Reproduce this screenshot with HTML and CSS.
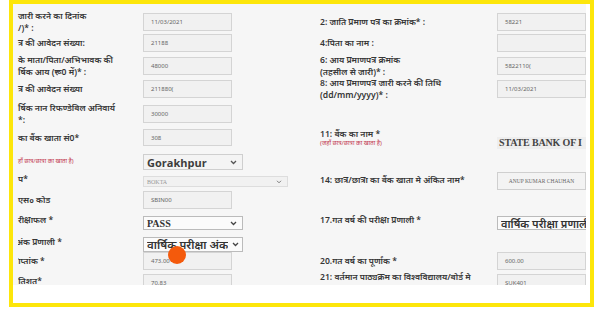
FILE: index.html
```html
<!DOCTYPE html>
<html lang="hi">

<head>
    <meta charset="UTF-8">
    <meta name="viewport" content="width=device-width, initial-scale=1.0">
    <title>छात्रवृत्ति आवेदन पत्र</title>
    <link rel="stylesheet" href="styles.css">
</head>

<body>
    <div class="frame">
        <div class="sheet">
            <div class="form-grid">
                <!-- row 1 -->
                <div class="lbl two">जारी करने का दिनांक<br>/)* :</div>
                <div class="cell"><div class="box">11/03/2021</div></div>
                <div class="lbl">2: जाति प्रमाण पत्र का क्रमांक* :</div>
                <div class="cell"><div class="box">58221</div></div>

                <!-- row 2 -->
                <div class="lbl">त्र की आवेदन संख्या:</div>
                <div class="cell"><div class="box">21188</div></div>
                <div class="lbl">4:पिता का नाम :</div>
                <div class="cell"><div class="box"></div></div>

                <!-- row 3 -->
                <div class="lbl two">के माता/पिता/अभिभावक की<br>र्षिक आय (रू0 में)* :</div>
                <div class="cell"><div class="box">48000</div></div>
                <div class="lbl two">6: आय प्रमाणपत्र क्रमांक<br>(तहसील से जारी)* :</div>
                <div class="cell"><div class="box">5822110(</div></div>

                <!-- row 4 -->
                <div class="lbl">त्र की आवेदन संख्या</div>
                <div class="cell"><div class="box">211880(</div></div>
                <div class="lbl two">8: आय प्रमाणपत्र जारी करने की तिथि<br>(dd/mm/yyyy)* :</div>
                <div class="cell"><div class="box">11/03/2021</div></div>

                <!-- row 5 -->
                <div class="lbl two">र्षिक नान रिफण्डेबिल अनिवार्य<br>*:</div>
                <div class="cell"><div class="box">30000</div></div>
                <div></div>
                <div></div>

                <!-- row 6 -->
                <div class="lbl">का बैंक खाता सं0*</div>
                <div class="cell"><div class="box box-short">308</div></div>
                <div class="lbl lbl-bank">11: बैंक का नाम *<br><span class="note">(जहाँ छात्र/छात्रा का खाता है)</span></div>
                <div class="cell cell-bank"><div class="bank">STATE BANK OF I</div></div>

                <!-- row 7 -->
                <div class="lbl note up-2">हाँ छात्र/छात्रा का खाता है)</div>
                <div class="cell">
                    <div class="pick pick-big">
                        <span>Gorakhpur</span>
                        <svg width="7" height="5" viewBox="0 0 7 5"><path d="M1 1l2.5 2.5L6 1" fill="none" stroke="#555" stroke-width="1.3"/></svg>
                    </div>
                </div>
                <div></div>
                <div></div>

                <!-- row 8 -->
                <div class="lbl up-6">प*</div>
                <div class="cell">
                    <div class="pick pick-wide">
                        <span>BOKTA</span>
                        <svg width="6" height="4" viewBox="0 0 7 5"><path d="M1 1l2.5 2.5L6 1" fill="none" stroke="#777" stroke-width="1.2"/></svg>
                    </div>
                </div>
                <div class="lbl up-5">14: छात्र/छात्रा का बैंक खाता मे अंकित नाम*</div>
                <div class="cell cell-name"><div class="box box-name">ANUP KUMAR CHAUHAN</div></div>

                <!-- row 9 -->
                <div class="lbl">एस० कोड</div>
                <div class="cell"><div class="box">SBIN00</div></div>
                <div></div>
                <div></div>

                <!-- row 10 -->
                <div class="lbl up-5">रीक्षाफल *</div>
                <div class="cell">
                    <div class="pick pick-pass">
                        <span>PASS</span>
                        <svg width="7" height="5" viewBox="0 0 7 5"><path d="M1 1l2.5 2.5L6 1" fill="none" stroke="#444" stroke-width="1.3"/></svg>
                    </div>
                </div>
                <div class="lbl up-5">17.गत वर्ष की परीक्षा प्रणाली *</div>
                <div class="cell"><div class="pick pick-cut"><span>वार्षिक परीक्षा प्रणाली</span></div></div>

                <!-- row 11 -->
                <div class="lbl cut up-4"><span class="shift-2">अंक प्रणाली *</span></div>
                <div class="cell">
                    <div class="pick pick-hindi">
                        <span>वार्षिक परीक्षा अंक</span>
                        <svg width="7" height="5" viewBox="0 0 7 5"><path d="M1 1l2.5 2.5L6 1" fill="none" stroke="#444" stroke-width="1.3"/></svg>
                    </div>
                </div>
                <div></div>
                <div></div>

                <!-- row 12 -->
                <div class="lbl cut"><span class="shift-5">प्राप्तांक *</span></div>
                <div class="cell"><div class="box">473.00</div></div>
                <div class="lbl">20.गत वर्ष का पूर्णांक *</div>
                <div class="cell"><div class="box">600.00</div></div>

                <!-- row 13 -->
                <div class="lbl cut up-2"><span class="shift-5">प्रतिशत*</span></div>
                <div class="cell"><div class="box">70.83</div></div>
                <div class="lbl two">21: वर्तमान पाठ्यक्रम का विश्वविद्यालय/बोर्ड मे<br>पंजीयन क्रमांक</div>
                <div class="cell"><div class="box">SUK401</div></div>
            </div>
        </div>
        <div class="pointer"></div>
    </div>
</body>

</html>
```

FILE: styles.css
```css
body {
    margin: 0;
    background-color: #ffffff;
    font-family: "Noto Sans", "DejaVu Sans", sans-serif;
    color: #363636;
}

.frame {
    position: relative;
    margin-left: 9px;
    width: 577px;
    height: 299px;
    border: 4px solid #fde60a;
    background-color: #ffffff;
}

.sheet {
    width: 568px;
    height: 272px;
    padding: 9px 0 0 5px;
    background-color: #f6f6f6;
    overflow: hidden;
}

.form-grid {
    display: grid;
    grid-template-columns: 125px 177px 177px 89px;
    grid-template-rows: 21px 23px 23px 25px 24px 25px 22px 15px 25px 21px 15px 22px 30px;
}

.lbl {
    display: flex;
    flex-direction: column;
    justify-content: center;
    height: 18px;
    font-size: 8.6px;
    font-weight: 600;
    line-height: 12px;
    white-space: nowrap;
}

/* two-line labels stay centred on the 18px input */
.two {
    height: 24px;
    margin-top: -3px;
}

/* labels that start off the left edge of the page */
.cut {
    overflow: hidden;
}

.up-2 { margin-top: -2px; }
.up-4 { margin-top: -4px; }
.up-5 { margin-top: -5px; }
.up-6 { margin-top: -6px; }

.shift-2 { margin-left: -2px; }
.shift-5 { margin-left: -5px; }

.note {
    color: #c2384f;
    font-size: 6px;
    font-weight: 400;
    line-height: 9px;
}

.lbl-bank {
    justify-content: flex-start;
    height: auto;
    line-height: 10px;
}

.cell {
    min-width: 0;
}

.box {
    box-sizing: border-box;
    width: 89px;
    height: 18px;
    padding-left: 7px;
    border: 1px solid #d4d4d4;
    background-color: #f1f1f1;
    font-size: 6px;
    line-height: 16px;
    color: #666;
    overflow: hidden;
    white-space: nowrap;
}

.box-short {
    height: 17px;
}

.cell-bank {
    padding-top: 8px;
}

.bank {
    box-sizing: border-box;
    width: 89px;
    height: 12px;
    padding-left: 2px;
    background-color: #eeeeee;
    font-family: "Liberation Serif", serif;
    font-weight: 700;
    font-size: 10px;
    letter-spacing: -0.15px;
    line-height: 12px;
    color: #444;
    white-space: nowrap;
    overflow: hidden;
}

.cell-name {
    margin-top: -4px;
}

.box-name {
    font-family: "Liberation Serif", serif;
    font-size: 5.5px;
    text-align: center;
    padding-left: 0;
    border-color: #cfcfcf;
    background-color: #f3f3f3;
}

.pick {
    box-sizing: border-box;
    display: flex;
    align-items: center;
    justify-content: space-between;
    width: 100px;
    padding: 0 5px 0 3px;
    border: 1px solid #cfcfcf;
    background-color: #f4f4f4;
    color: #333;
    white-space: nowrap;
    overflow: hidden;
}

.pick span {
    overflow: hidden;
}

.pick-big {
    height: 16px;
    font-family: "Open Sans", sans-serif;
    font-size: 11px;
    font-weight: 700;
    color: #3d3d3d;
}

.pick-wide {
    width: 145px;
    height: 11px;
    font-family: "Liberation Serif", serif;
    font-size: 6px;
    color: #999;
    background-color: #f1f1f1;
    border-color: #dddddd;
}

.pick-pass {
    height: 14px;
    font-family: "Liberation Serif", serif;
    font-size: 10px;
    font-weight: 700;
    border-color: #bbbbbb;
    background-color: #fbfbfb;
}

.pick-hindi {
    height: 15px;
    font-size: 11.5px;
    font-weight: 600;
    border-color: #bbbbbb;
    background-color: #fbfbfb;
    padding-right: 3px;
}

.pick-cut {
    width: 89px;
    height: 14px;
    font-size: 11px;
    font-weight: 600;
    border-right: none;
    border-color: #bbbbbb;
    background-color: #fbfbfb;
    padding: 0 0 0 3px;
    justify-content: flex-start;
}

.pointer {
    position: absolute;
    left: 155px;
    top: 242px;
    width: 18px;
    height: 18px;
    border-radius: 50%;
    background-color: #f45a0c;
}
```
